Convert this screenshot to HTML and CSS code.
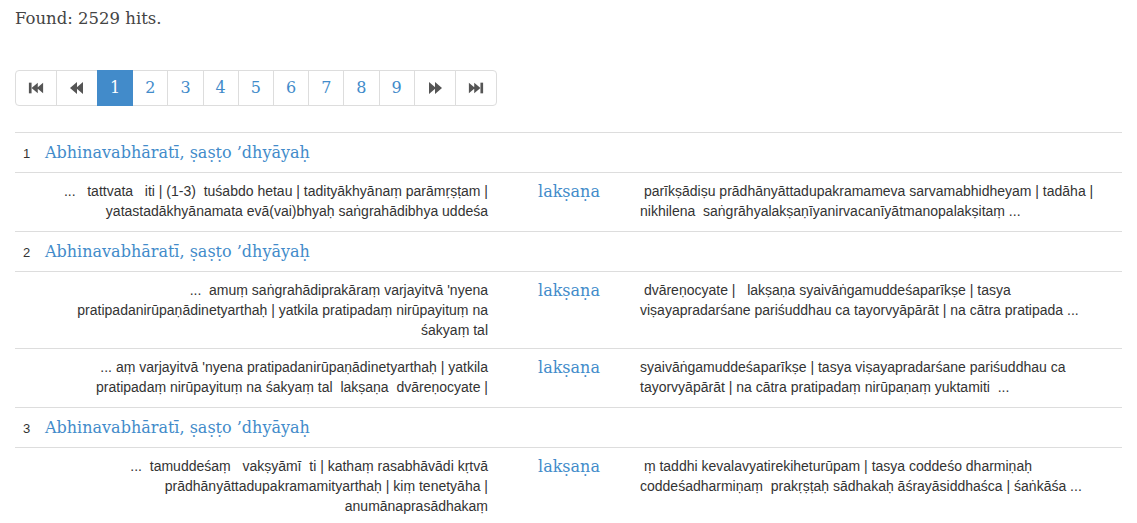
FILE: index.html
```html
<!DOCTYPE html>
<html>
<head>
<meta charset="utf-8">
<link rel="stylesheet" href="styles.css">
</head>
<body>
<div class="container">
  <p class="found">Found: 2529 hits.</p>
  <ul class="pagination">
    <li><a href="#" class="icon" aria-label="First"><svg width="18" height="14" viewBox="0 0 18 14"><rect x="1" y="1" width="3" height="12"/><path d="M4 7 L11 1 V13 Z M10 7 L17 1 V13 Z"/></svg></a></li>
    <li><a href="#" class="icon" aria-label="Previous"><svg width="16" height="14" viewBox="0 0 16 14"><path d="M1 7 L8 1 V13 Z M7 7 L14 1 V13 Z"/></svg></a></li>
    <li class="active"><a href="#">1</a></li>
    <li><a href="#">2</a></li>
    <li><a href="#">3</a></li>
    <li><a href="#">4</a></li>
    <li><a href="#">5</a></li>
    <li><a href="#">6</a></li>
    <li><a href="#">7</a></li>
    <li><a href="#">8</a></li>
    <li><a href="#">9</a></li>
    <li><a href="#" class="icon" aria-label="Next"><svg width="16" height="14" viewBox="0 0 16 14"><path d="M2 1 L9 7 L2 13 Z M8 1 L15 7 L8 13 Z"/></svg></a></li>
    <li><a href="#" class="icon" aria-label="Last"><svg width="18" height="14" viewBox="0 0 18 14"><path d="M1 1 L8 7 L1 13 Z M7 1 L14 7 L7 13 Z"/><rect x="14" y="1" width="3" height="12"/></svg></a></li>
  </ul>

  <table class="hits">
    <colgroup><col class="c-left"><col class="c-kw"><col class="c-right"></colgroup>
    <tbody>
      <tr class="head-row">
        <td colspan="3"><span class="num">1</span><a href="#" class="title">Abhinavabhāratī, ṣaṣṭo ’dhyāyaḥ</a></td>
      </tr>
      <tr class="ctx-row">
        <td class="left">...&nbsp;&nbsp; tattvata &nbsp; iti | (1-3) &nbsp;tuśabdo hetau | tadityākhyānaṃ parāmṛṣṭam | yatastadākhyānamata evā(vai)bhyaḥ saṅgrahādibhya uddeśa</td>
        <td class="kw"><a href="#">lakṣaṇa</a></td>
        <td class="right">&nbsp;parīkṣādiṣu prādhānyāttadupakramameva sarvamabhidheyam | tadāha | nikhilena &nbsp;saṅgrāhyalakṣaṇīyanirvacanīyātmanopalakṣitaṃ ...</td>
      </tr>
      <tr class="head-row">
        <td colspan="3"><span class="num">2</span><a href="#" class="title">Abhinavabhāratī, ṣaṣṭo ’dhyāyaḥ</a></td>
      </tr>
      <tr class="ctx-row">
        <td class="left">... &nbsp;amuṃ saṅgrahādiprakāraṃ varjayitvā 'nyena pratipadanirūpaṇādinetyarthaḥ | yatkila pratipadaṃ nirūpayituṃ na śakyaṃ tal</td>
        <td class="kw"><a href="#">lakṣaṇa</a></td>
        <td class="right">&nbsp;dvāreṇocyate | &nbsp; lakṣaṇa syaivāṅgamuddeśaparīkṣe | tasya viṣayapradarśane pariśuddhau ca tayorvyāpārāt | na cātra pratipada ...</td>
      </tr>
      <tr class="ctx-row">
        <td class="left">... aṃ varjayitvā 'nyena pratipadanirūpaṇādinetyarthaḥ | yatkila pratipadaṃ nirūpayituṃ na śakyaṃ tal &nbsp;lakṣaṇa &nbsp;dvāreṇocyate |</td>
        <td class="kw"><a href="#">lakṣaṇa</a></td>
        <td class="right">syaivāṅgamuddeśaparīkṣe | tasya viṣayapradarśane pariśuddhau ca tayorvyāpārāt | na cātra pratipadaṃ nirūpaṇaṃ yuktamiti &nbsp;...</td>
      </tr>
      <tr class="head-row">
        <td colspan="3"><span class="num">3</span><a href="#" class="title">Abhinavabhāratī, ṣaṣṭo ’dhyāyaḥ</a></td>
      </tr>
      <tr class="ctx-row">
        <td class="left">... &nbsp;tamuddeśaṃ &nbsp; vakṣyāmī &nbsp;ti | kathaṃ rasabhāvādi kṛtvā prādhānyāttadupakramamityarthaḥ | kiṃ tenetyāha | anumānaprasādhakaṃ</td>
        <td class="kw"><a href="#">lakṣaṇa</a></td>
        <td class="right">&nbsp;ṃ taddhi kevalavyatirekiheturūpam | tasya coddeśo dharmiṇaḥ coddeśadharmiṇaṃ &nbsp;prakṛṣṭaḥ sādhakaḥ āśrayāsiddhaśca | śaṅkāśa ...</td>
      </tr>
    </tbody>
  </table>
</div>
</body>
</html>
```

FILE: styles.css
```css
html, body {
  margin: 0;
  padding: 0;
  background: #fff;
}

body {
  font-family: "Liberation Sans", Arial, sans-serif;
  font-size: 14px;
  line-height: 20px;
  color: #333;
}

.container {
  padding: 8px 15px 0 15px;
}

.found {
  margin: 0;
  font-family: "DejaVu Serif", serif;
  font-size: 16.5px;
  line-height: 21px;
  color: #444;
}

.pagination {
  display: flex;
  list-style: none;
  padding: 0;
  margin: 41px 0 26px 0;
  width: max-content;
  border-radius: 4px;
}

.pagination li a {
  display: flex;
  align-items: center;
  justify-content: center;
  height: 34px;
  padding: 0 12px;
  min-width: 10px;
  border: 1px solid #ddd;
  margin-left: -1px;
  text-decoration: none;
  color: #428bca;
  font-family: "DejaVu Serif", serif;
  font-size: 16px;
  background: #fff;
}

.pagination li:first-child a {
  margin-left: 0;
  border-radius: 4px 0 0 4px;
}

.pagination li:last-child a {
  border-radius: 0 4px 4px 0;
}

.pagination li a.icon {
  width: 16px;
  fill: #555;
}

.pagination li.active a {
  background: #428bca;
  border-color: #428bca;
  color: #fff;
  position: relative;
  z-index: 1;
}

.hits {
  width: 100%;
  border-collapse: collapse;
  table-layout: fixed;
}

.c-left { width: 481px; }
.c-kw { width: 136px; }
.c-right { width: auto; }

.hits td {
  border-top: 1px solid #ddd;
  padding: 8px;
  vertical-align: top;
}

.head-row td {
  padding: 8px;
  height: 23px;
}

.num {
  display: inline-block;
  width: 22px;
  font-size: 13px;
  color: #333;
}

.title {
  font-family: "DejaVu Serif", serif;
  font-size: 16px;
  line-height: 23px;
  color: #428bca;
  text-decoration: none;
}

.ctx-row td {
  height: 42px;
}

.hits td.left {
  text-align: right;
  padding-left: 30px;
}

.hits td.kw {
  text-align: center;
  padding-left: 18px;
}

.kw a {
  font-family: "DejaVu Serif", serif;
  font-size: 16px;
  line-height: 22px;
  color: #428bca;
  text-decoration: none;
}

.right {
  text-align: left;
}
```
